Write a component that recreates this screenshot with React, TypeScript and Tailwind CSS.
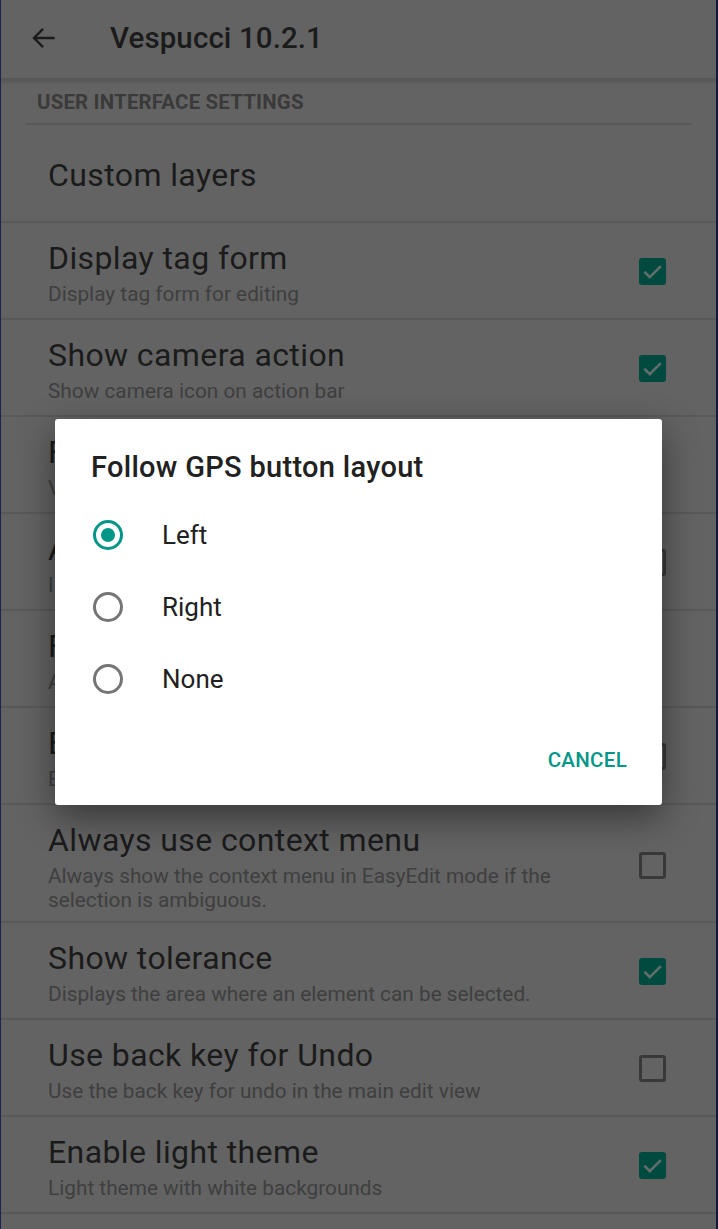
import React from "react";

type Row = {
  title: string;
  sub?: string;
  sub2?: boolean;
  check?: boolean | null;
};

const rows: Row[] = [
  { title: "Display tag form", sub: "Display tag form for editing", check: true },
  { title: "Show camera action", sub: "Show camera icon on action bar", check: true },
  { title: "Fullscreen mode", sub: "Valid only on devices with soft buttons", check: null },
  { title: "Always show the action bar", sub: "Improves usability on small screens", check: false },
  { title: "Follow GPS button layout", sub: "Arrangement of the follow GPS button", check: null },
  { title: "Enable scale", sub: "Enables the display of the map scale", check: false },
  {
    title: "Always use context menu",
    sub: "Always show the context menu in EasyEdit mode if the selection is ambiguous.",
    sub2: true,
    check: false,
  },
  { title: "Show tolerance", sub: "Displays the area where an element can be selected.", check: true },
  { title: "Use back key for Undo", sub: "Use the back key for undo in the main edit view", check: false },
  { title: "Enable light theme", sub: "Light theme with white backgrounds", check: true },
];

function Checkbox({ checked }: { checked: boolean }) {
  if (checked) {
    return (
      <div className="w-[27px] h-[27px] rounded-[3px] bg-[#004a40] flex items-center justify-center">
        <svg width="25" height="25" viewBox="0 0 24 24">
          <path d="M4.2 12.2l5.2 5.2L20 6.8" fill="none" stroke="#5f6e6b" strokeWidth="2.6" />
        </svg>
      </div>
    );
  }
  return <div className="w-[27px] h-[27px] rounded-[3px] border-[3px] border-[#393939]" />;
}

function Radio({ checked }: { checked: boolean }) {
  return (
    <div
      className={
        checked
          ? "w-[30px] h-[30px] rounded-full border-[3px] border-[#009688] flex items-center justify-center"
          : "w-[30px] h-[30px] rounded-full border-[3px] border-[#757575]"
      }
    >
      {checked && <div className="w-[14px] h-[14px] rounded-full bg-[#009688]" />}
    </div>
  );
}

export default function App() {
  return (
    <div
      className="relative w-[718px] h-[1229px] overflow-hidden bg-[#636363] border-l border-l-[#1c2452] border-r-2 border-r-[#14163a] flex flex-col"
      style={{ fontFamily: "Roboto, 'Noto Sans', sans-serif" }}
    >
      {/* App bar */}
      <div className="h-[80px] shrink-0 flex items-start border-b-2 border-b-[#585858] shadow-[0_2px_3px_rgba(0,0,0,0.15)]">
        <div className="h-[76px] flex items-center pl-[27px]">
          <svg width="32" height="32" viewBox="0 0 24 24">
            <path d="M20 12H4.5M11.3 5.2L4.5 12l6.8 6.8" fill="none" stroke="#1c1c1c" strokeWidth="1.8" />
          </svg>
          <div className="ml-[50px] text-[29.5px] font-medium text-[#1b1b1b] leading-[36px] tracking-[0.1px]">
            Vespucci 10.2.1
          </div>
        </div>
      </div>

      {/* Section header */}
      <div className="pl-[25px] pr-[24px] shrink-0">
        <div className="pl-[11px] pt-[10px] pb-[8px] border-b-2 border-b-[#595959] text-[20.4px] font-bold text-[#3a3a3a] leading-[25px] tracking-[0.2px]">
          USER INTERFACE SETTINGS
        </div>
      </div>

      {/* Custom layers */}
      <div className="shrink-0 pl-[47px] pt-[32px] pb-[28px] border-b-2 border-b-[#595959]">
        <div className="text-[32px] leading-[36px] text-[#1b1b1b] tracking-[0.4px]">Custom layers</div>
      </div>

      {rows.map((r, i) => (
        <div
          key={i}
          className={
            r.sub2
              ? "shrink-0 flex items-center pl-[47px] pr-[50px] pt-[17px] pb-[9px] border-b-2 border-b-[#595959]"
              : "shrink-0 flex items-center pl-[47px] pr-[50px] pt-[17px] pb-[12px] border-b-2 border-b-[#595959]"
          }
        >
          <div className="flex-1 min-w-0">
            <div className="text-[32px] leading-[36px] text-[#1b1b1b] whitespace-nowrap tracking-[0.4px]">{r.title}</div>
            <div className="mt-[6px] text-[20.8px] leading-[24px] text-[#3f3f3f]">{r.sub}</div>
          </div>
          <div className="w-[27px] ml-[40px] shrink-0 -mt-[4px]">
            {r.check !== null && r.check !== undefined && <Checkbox checked={r.check} />}
          </div>
        </div>
      ))}

      {/* Dialog */}
      <div className="absolute left-[54px] top-[419px] w-[607px] h-[386px] bg-white rounded-[3px] shadow-[0_12px_36px_rgba(0,0,0,0.45)] flex flex-col">
        <div className="pl-[36px] pt-[32px] text-[29px] font-medium leading-[32px] text-[#212121] tracking-[0.3px]">
          Follow GPS button layout
        </div>
        <div className="mt-[16px] flex flex-col">
          {["Left", "Right", "None"].map((t, i) => (
            <div key={t} className="h-[72px] flex items-center pl-[38px]">
              <Radio checked={i === 0} />
              <div className="ml-[39px] text-[26px] leading-[32px] text-[#212121]">{t}</div>
            </div>
          ))}
        </div>
        <div className="flex justify-end pr-[35px] mt-[33px]">
          <div className="text-[20.5px] font-medium leading-[24px] text-[#009688] tracking-[0.3px]">CANCEL</div>
        </div>
      </div>
    </div>
  );
}
